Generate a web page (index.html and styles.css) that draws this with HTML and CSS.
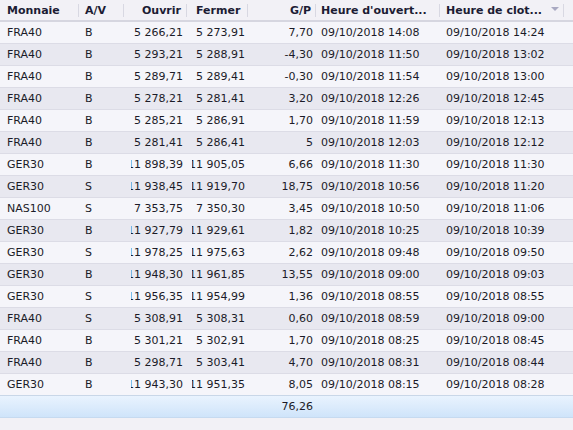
FILE: index.html
```html
<!DOCTYPE html>
<html lang="fr">
<head>
<meta charset="utf-8">
<title>Positions</title>
<link rel="stylesheet" href="styles.css">
</head>
<body>
<div class="grid">
  <div class="hd left"><span>Monnaie</span></div>
  <div class="hd left av"><span>A/V</span></div>
  <div class="hd right"><span>Ouvrir</span></div>
  <div class="hd left ferm"><span>Fermer</span></div>
  <div class="hd right gp"><span>G/P</span></div>
  <div class="hd left h1"><span>Heure d'ouvert...</span></div>
  <div class="hd left h2 last"><span>Heure de clot...</span><i class="sort"></i></div>
</div>
<div id="rows"></div>
<div class="grid foot">
  <div></div><div></div><div></div><div></div>
  <div class="c num gp"><div class="in">76,26</div></div>
  <div></div><div></div>
</div>
<script>
const data = [
["FRA40","B","5 266,21","5 273,91","7,70","09/10/2018 14:08","09/10/2018 14:24"],
["FRA40","B","5 293,21","5 288,91","-4,30","09/10/2018 11:50","09/10/2018 13:02"],
["FRA40","B","5 289,71","5 289,41","-0,30","09/10/2018 11:54","09/10/2018 13:00"],
["FRA40","B","5 278,21","5 281,41","3,20","09/10/2018 12:26","09/10/2018 12:45"],
["FRA40","B","5 285,21","5 286,91","1,70","09/10/2018 11:59","09/10/2018 12:13"],
["FRA40","B","5 281,41","5 286,41","5","09/10/2018 12:03","09/10/2018 12:12"],
["GER30","B","11 898,39","11 905,05","6,66","09/10/2018 11:30","09/10/2018 11:30"],
["GER30","S","11 938,45","11 919,70","18,75","09/10/2018 10:56","09/10/2018 11:20"],
["NAS100","S","7 353,75","7 350,30","3,45","09/10/2018 10:50","09/10/2018 11:06"],
["GER30","B","11 927,79","11 929,61","1,82","09/10/2018 10:25","09/10/2018 10:39"],
["GER30","S","11 978,25","11 975,63","2,62","09/10/2018 09:48","09/10/2018 09:50"],
["GER30","B","11 948,30","11 961,85","13,55","09/10/2018 09:00","09/10/2018 09:03"],
["GER30","S","11 956,35","11 954,99","1,36","09/10/2018 08:55","09/10/2018 08:55"],
["FRA40","S","5 308,91","5 308,31","0,60","09/10/2018 08:59","09/10/2018 09:00"],
["FRA40","B","5 301,21","5 302,91","1,70","09/10/2018 08:25","09/10/2018 08:45"],
["FRA40","B","5 298,71","5 303,41","4,70","09/10/2018 08:31","09/10/2018 08:44"],
["GER30","B","11 943,30","11 951,35","8,05","09/10/2018 08:15","09/10/2018 08:28"]
];
const cls = ["c txt mon","c txt av","c num ouv","c num ferm","c num gp","c txt h1","c txt h2"];
const host = document.getElementById("rows");
data.forEach((r, i) => {
  const row = document.createElement("div");
  row.className = "grid row " + (i % 2 ? "even" : "odd");
  r.forEach((v, j) => {
    const c = document.createElement("div");
    c.className = cls[j];
    const inner = document.createElement("div");
    inner.className = "in";
    inner.textContent = v;
    c.appendChild(inner);
    row.appendChild(c);
  });
  host.appendChild(row);
});
</script>
</body>
</html>
```

FILE: styles.css
```css
html, body {
  margin: 0;
  padding: 0;
  background: #f2f1f6;
}
body {
  width: 573px;
  height: 430px;
  overflow: hidden;
  font-family: "DejaVu Sans", Verdana, sans-serif;
  font-size: 11px;
  color: #1b1b28;
}
.grid {
  display: grid;
  grid-template-columns: 79px 45px 63px 61px 68px 124px 133px;
}
.hd {
  height: 20px;
  border-bottom: 2px solid #d6d6e0;
  display: flex;
  align-items: center;
  font-weight: bold;
  color: #1c1c34;
  white-space: nowrap;
  overflow: hidden;
  position: relative;
}
.hd::after {
  content: "";
  position: absolute;
  right: 0;
  top: 4px;
  width: 1px;
  height: 13px;
  background: #d8d8e2;
}
.hd.last::after {
  right: 9px;
}
.hd.left { padding-left: 7px; }
.hd.av { padding-left: 6px; }
.hd.ferm { padding-left: 9px; }
.hd.h1 { padding-left: 5px; }
.hd.h2 { padding-left: 6px; }
.hd.right { justify-content: flex-end; padding-right: 6px; }
.hd.gp { padding-right: 5px; }
.sort {
  margin-left: 9px;
  width: 0;
  height: 0;
  border-left: 4px solid transparent;
  border-right: 4px solid transparent;
  border-top: 4px solid #a9a9c2;
  margin-top: -3px;
}
.row {
  height: 21px;
  border-bottom: 1px solid #dcdce6;
}
.row.odd { background: #f5f5fa; }
.row.even { background: #e8e8f0; }
.c {
  display: flex;
  align-items: center;
  white-space: nowrap;
  min-width: 0;
}
.c .in {
  display: flex;
  overflow: hidden;
  flex: 1;
  min-width: 0;
}
.txt .in { justify-content: flex-start; }
.num .in { justify-content: flex-end; }
.mon { padding-left: 7px; }
.av { padding-left: 6px; }
.ouv { padding-left: 7px; padding-right: 4px; }
.ferm { padding-left: 5px; padding-right: 3px; }
.gp { padding-left: 4px; padding-right: 3px; }
.h1 { padding-left: 5px; }
.h2 { padding-left: 6px; }
.foot {
  height: 21px;
  border-top: 1px solid #c9d7e8;
  border-bottom: 1px solid #c6daf0;
  background: linear-gradient(to bottom, #e9f3fe, #cfe4fa);
  margin-top: -1px;
}
```
